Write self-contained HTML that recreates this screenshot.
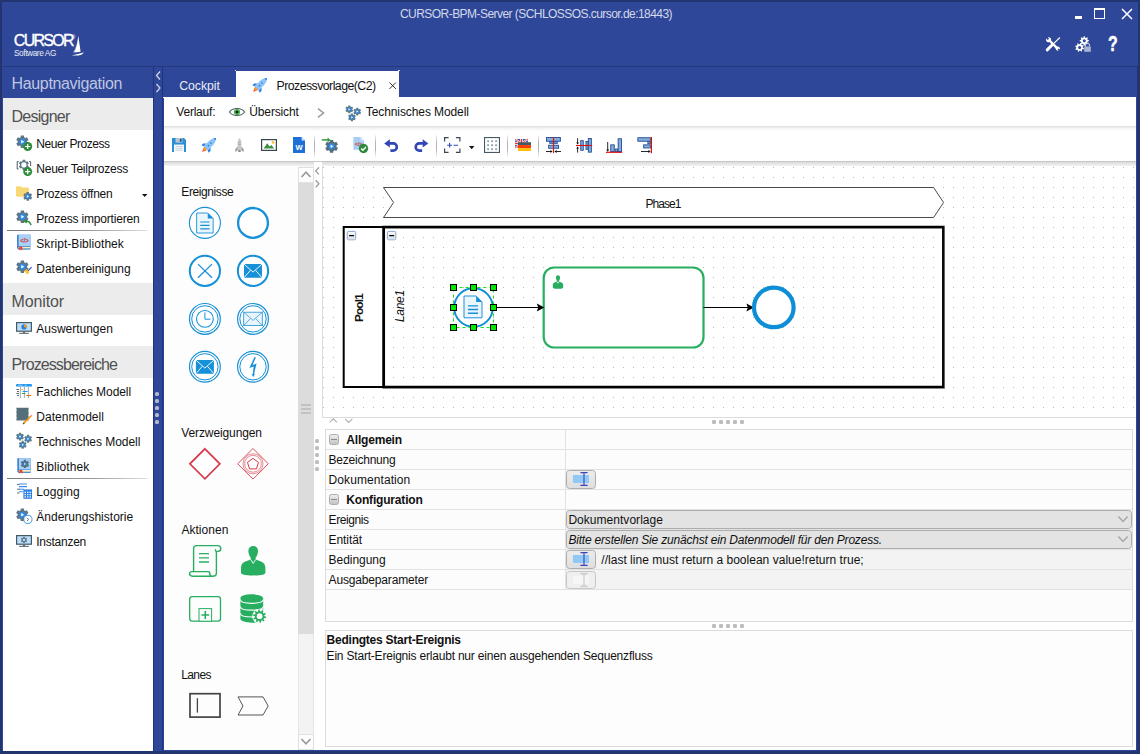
<!DOCTYPE html>
<html><head><meta charset="utf-8"><title>CURSOR-BPM-Server</title>
<style>
*{box-sizing:border-box;margin:0;padding:0}
html,body{width:1140px;height:754px;overflow:hidden}
body{background:#2e4798;font-family:"Liberation Sans",sans-serif;font-size:12px;color:#111;position:relative}
div{position:absolute}
.t{white-space:nowrap;line-height:1}
svg{position:absolute;overflow:visible}
.sec{left:3px;width:150px;background:#ececec}
.nsep{left:7px;width:140px;height:1px;background:linear-gradient(90deg,#777,#999 60%,#ddd)}
.vl{width:1px;background:#20347a}
.hl{height:1px;background:#253a7d}
.sh{left:164px;width:972px;height:5px}
.tsep{top:134px;width:1px;height:24px;background:linear-gradient(rgba(170,170,170,0),#b4b4b4 35%,#b4b4b4 65%,rgba(170,170,170,0))}
</style></head><body>
<div style="left:0;top:0;width:1140px;height:2px;background:#233571"></div>
<div style="left:0;top:0;width:2px;height:754px;background:#233571"></div>
<div style="left:1138px;top:0;width:2px;height:754px;background:#233571"></div>
<div style="left:1136.5px;top:66px;width:3.5px;height:688px;background:#233571"></div>
<div style="left:0;top:751px;width:1140px;height:3px;background:#233571"></div>
<div class="hl" style="left:2px;top:66px;width:1135px"></div>
<div class="vl" style="left:153px;top:66px;height:686px"></div>
<div class="vl" style="left:162px;top:66px;height:686px"></div>

<div class="t" style="left:400px;top:7.84px;font-size:12px;color:#d3d8ea;letter-spacing:-0.550px;">CURSOR-BPM-Server (SCHLOSSOS.cursor.de:18443)</div>
<div class="t" style="left:13.8px;top:33.06px;font-size:16px;color:#fff;letter-spacing:-1.724px;-webkit-text-stroke:0.35px #fff;">CURSOR</div>
<div class="t" style="left:72px;top:35.69px;font-size:4.5px;color:#fff;">®</div>
<div class="t" style="left:14px;top:48.97px;font-size:8.3px;color:#e8ebf5;letter-spacing:-0.416px;">Software AG</div>
<svg style="left:70.9px;top:35px" width="14" height="22" viewBox="0 0 14 22">
<path d="M7.3 0.8 L9.6 16.8 L3.4 17.6 C5.6 12.5 6.6 6.5 7.3 0.8Z" fill="#fff"/>
<path d="M7.0 3.5 C6.3 8.5 4.6 13.8 2.2 17.6 L3.2 17.5 C5.4 13 6.5 8 7.0 3.5Z" fill="#e4e8f4"/>
<path d="M0.8 20.2 C4.5 19.6 9 18.6 12.8 17.2 C12 18.6 10.8 19.6 9.6 20 C6.5 20.6 3.5 20.7 0.8 20.2Z" fill="#fff"/>
</svg>
<div style="left:1075px;top:15.5px;width:7px;height:3px;background:#fff"></div>
<div style="left:1094px;top:8px;width:11px;height:11px;border:1.2px solid #fff;border-top-width:2px"></div>
<svg style="left:1121px;top:8px" width="12" height="12" viewBox="0 0 12 12"><path d="M1 1 L11 11 M11 1 L1 11" stroke="#fff" stroke-width="1.5" fill="none"/></svg>

<svg style="left:1045px;top:36px" width="16" height="16" viewBox="0 0 16 16">
<path d="M4 4 L12.6 12.6" stroke="#fff" stroke-width="2.4" fill="none"/>
<circle cx="3.6" cy="3.8" r="2.5" fill="#fff"/><path d="M3.4 3.4 L0.6 0.2" stroke="#2e4798" stroke-width="1.9"/>
<circle cx="12.8" cy="12.6" r="2.1" fill="#fff"/><path d="M13.2 13 L15.6 15.6" stroke="#2e4798" stroke-width="1.5"/>
<path d="M2.2 13.9 L6.8 9.3" stroke="#fff" stroke-width="2.9" stroke-linecap="round" fill="none"/>
<path d="M6.8 9.3 L14.9 1.5" stroke="#fff" stroke-width="1.1" fill="none"/>
</svg>
<svg style="left:1075px;top:36px" width="17" height="17" viewBox="0 0 17 17"><polygon points="13.88,4.35 13.88,5.25 12.46,5.76 12.21,6.36 12.86,7.72 12.22,8.36 10.86,7.71 10.26,7.96 9.75,9.38 8.85,9.38 8.34,7.96 7.74,7.71 6.38,8.36 5.74,7.72 6.39,6.36 6.14,5.76 4.72,5.25 4.72,4.35 6.14,3.84 6.39,3.24 5.74,1.88 6.38,1.24 7.74,1.89 8.34,1.64 8.85,0.22 9.75,0.22 10.26,1.64 10.86,1.89 12.22,1.24 12.86,1.88 12.21,3.24 12.46,3.84" fill="#fff"/><circle cx="9.3" cy="4.8" r="1.5" fill="#2e4798"/><polygon points="9.01,12.30 8.75,13.14 7.25,13.19 6.85,13.68 7.08,15.16 6.30,15.57 5.21,14.54 4.58,14.60 3.70,15.81 2.86,15.55 2.81,14.05 2.32,13.65 0.84,13.88 0.43,13.10 1.46,12.01 1.40,11.38 0.19,10.50 0.45,9.66 1.95,9.61 2.35,9.12 2.12,7.64 2.90,7.23 3.99,8.26 4.62,8.20 5.50,6.99 6.34,7.25 6.39,8.75 6.88,9.15 8.36,8.92 8.77,9.70 7.74,10.79 7.80,11.42" fill="#fff"/><circle cx="4.6" cy="11.4" r="1.5" fill="#2e4798"/><rect x="9.2" y="10.5" width="6.6" height="5.3" fill="#a9b3d6"/><path d="M10.5 10.5 V9.2 A2 2 0 0 1 14.5 9.2 V10.5" stroke="#c9d0e8" stroke-width="1.1" fill="none"/></svg>
<div class="t" style="left:1108.3px;top:33.80px;font-size:21.5px;color:#fff;font-weight:700;transform:scaleX(.74);transform-origin:0 0;-webkit-text-stroke:0.5px #fff;">?</div>
<div style="left:3px;top:98px;width:150px;height:653px;background:#fff"></div>
<div class="t" style="left:11.5px;top:75.96px;font-size:16px;color:#bec6e1;letter-spacing:-0.343px;">Hauptnavigation</div>
<div class="sec" style="top:98px;height:32px"></div>
<div class="t" style="left:11.5px;top:109.16px;font-size:16px;color:#505050;letter-spacing:-0.754px;">Designer</div>
<div class="sec" style="top:283px;height:32px"></div>
<div class="t" style="left:11.5px;top:294.16px;font-size:16px;color:#505050;letter-spacing:-0.123px;">Monitor</div>
<div class="sec" style="top:346px;height:32px"></div>
<div class="t" style="left:11.5px;top:357.16px;font-size:16px;color:#505050;letter-spacing:-0.911px;">Prozessbereiche</div>
<div class="t" style="left:36.3px;top:137.84px;font-size:12px;color:#111;letter-spacing:-0.467px;">Neuer Prozess</div>
<div class="t" style="left:36.3px;top:162.84px;font-size:12px;color:#111;letter-spacing:-0.243px;">Neuer Teilprozess</div>
<div class="t" style="left:36.3px;top:187.84px;font-size:12px;color:#111;letter-spacing:-0.266px;">Prozess öffnen</div>
<div class="t" style="left:36.3px;top:212.84px;font-size:12px;color:#111;letter-spacing:-0.185px;">Prozess importieren</div>
<div class="t" style="left:36.3px;top:237.84px;font-size:12px;color:#111;letter-spacing:0.053px;">Skript-Bibliothek</div>
<div class="t" style="left:36.3px;top:262.84px;font-size:12px;color:#111;letter-spacing:-0.028px;">Datenbereinigung</div>
<div class="t" style="left:36.3px;top:322.84px;font-size:12px;color:#111;letter-spacing:-0.018px;">Auswertungen</div>
<div class="t" style="left:36.3px;top:385.84px;font-size:12px;color:#111;letter-spacing:-0.079px;">Fachliches Modell</div>
<div class="t" style="left:36.3px;top:410.84px;font-size:12px;color:#111;letter-spacing:0.020px;">Datenmodell</div>
<div class="t" style="left:36.3px;top:435.84px;font-size:12px;color:#111;letter-spacing:-0.040px;">Technisches Modell</div>
<div class="t" style="left:36.3px;top:460.84px;font-size:12px;color:#111;letter-spacing:0.097px;">Bibliothek</div>
<div class="t" style="left:36.3px;top:485.84px;font-size:12px;color:#111;letter-spacing:0.097px;">Logging</div>
<div class="t" style="left:36.3px;top:510.84px;font-size:12px;color:#111;letter-spacing:0.010px;">Änderungshistorie</div>
<div class="t" style="left:36.3px;top:535.84px;font-size:12px;color:#111;letter-spacing:-0.261px;">Instanzen</div>
<div class="nsep" style="top:230px"></div>
<div class="nsep" style="top:478px"></div>
<svg style="left:141.8px;top:193.8px" width="5.4" height="3" viewBox="0 0 5.4 3"><path d="M0 0 H5.4 L2.7 3Z" fill="#111"/></svg>
<svg style="left:0;top:0" width="160" height="754" viewBox="0 0 160 754"><path d="M20.67 137.22 L20.79 135.51 L24.01 135.51 L24.13 137.22 L25.41 137.96 L26.96 137.21 L28.57 140.00 L27.14 140.96 L27.14 142.44 L28.57 143.40 L26.96 146.19 L25.41 145.44 L24.13 146.18 L24.01 147.89 L20.79 147.89 L20.67 146.18 L19.39 145.44 L17.84 146.19 L16.23 143.40 L17.66 142.44 L17.66 140.96 L16.23 140.00 L17.84 137.21 L19.39 137.96Z" fill="#5d7786"/><circle cx="22.4" cy="141.7" r="3.0" fill="#2a8bf0"/><path d="M21.26 139.96 L24.26 141.7 L21.26 143.44Z" fill="#fff"/><circle cx="27.7" cy="146.5" r="4.5" fill="#2e8b3a"/><path d="M25.099999999999998 146.5 H30.3 M27.7 143.9 V149.1" stroke="#fff" stroke-width="1.2"/><path d="M18.6 161.6 H17.2 V169 H18.6 M29.2 161.6 H30.6 V166" stroke="#37474f" stroke-width="0.9" fill="none"/><path d="M22.49 161.26 L22.59 159.87 L25.21 159.87 L25.31 161.26 L26.35 161.86 L27.60 161.25 L28.91 163.52 L27.75 164.30 L27.75 165.50 L28.91 166.28 L27.60 168.55 L26.35 167.94 L25.31 168.54 L25.21 169.93 L22.59 169.93 L22.49 168.54 L21.45 167.94 L20.20 168.55 L18.89 166.28 L20.05 165.50 L20.05 164.30 L18.89 163.52 L20.20 161.25 L21.45 161.86Z" fill="#5d7786"/><circle cx="23.9" cy="164.9" r="2.6" fill="#fff"/><circle cx="27.7" cy="171.6" r="4.5" fill="#2e8b3a"/><path d="M25.099999999999998 171.6 H30.3 M27.7 169.0 V174.2" stroke="#fff" stroke-width="1.2"/><path d="M16 187.3 C16 186.6 16.5 186.2 17.2 186.2 H20.6 L22 187.6 H27.8 C28.5 187.6 29 188.1 29 188.8 V195.6 C29 196.2 28.5 196.7 27.8 196.7 H17.2 C16.5 196.7 16 196.2 16 195.6Z" fill="#f8d775"/><path d="M26.46 193.18 L26.54 191.95 L28.86 191.95 L28.94 193.18 L29.87 193.71 L30.98 193.17 L32.13 195.18 L31.11 195.87 L31.11 196.93 L32.13 197.62 L30.98 199.63 L29.87 199.09 L28.94 199.62 L28.86 200.85 L26.54 200.85 L26.46 199.62 L25.53 199.09 L24.42 199.63 L23.27 197.62 L24.29 196.93 L24.29 195.87 L23.27 195.18 L24.42 193.17 L25.53 193.71Z" fill="#5d7786"/><circle cx="27.7" cy="196.4" r="2.2" fill="#2a8bf0"/><path d="M26.86 195.12 L29.06 196.4 L26.86 197.68Z" fill="#fff"/><path d="M20.67 212.22 L20.79 210.51 L24.01 210.51 L24.13 212.22 L25.41 212.96 L26.96 212.21 L28.57 215.00 L27.14 215.96 L27.14 217.44 L28.57 218.40 L26.96 221.19 L25.41 220.44 L24.13 221.18 L24.01 222.89 L20.79 222.89 L20.67 221.18 L19.39 220.44 L17.84 221.19 L16.23 218.40 L17.66 217.44 L17.66 215.96 L16.23 215.00 L17.84 212.21 L19.39 212.96Z" fill="#5d7786"/><circle cx="22.4" cy="216.7" r="3.0" fill="#2a8bf0"/><path d="M21.26 214.96 L24.26 216.7 L21.26 218.44Z" fill="#fff"/><path d="M25.2 221.3 C28.2 220.6 30.4 222.4 31 225.2" stroke="#2e8b3a" stroke-width="1.5" fill="none"/><path d="M23.2 221.6 L26.6 219.2 L26.8 223.4Z" fill="#2e8b3a"/><path d="M17.200000000000003 234.8 H30.400000000000002 V249.4 H19.0 C17.8 249.4 17.200000000000003 248.60000000000002 17.200000000000003 247.60000000000002Z" fill="#1769c8"/><rect x="18.5" y="234.8" width="11.9" height="11.4" fill="#a9d1f7"/><path d="M18.8 246.70000000000002 H30.400000000000002 V248.4 H18.8 C18.200000000000003 248.20000000000002 18.200000000000003 247.0 18.8 246.70000000000002Z" fill="#fbeec2"/><path d="M19.200000000000003 246.70000000000002 H22.200000000000003 V250.4 L20.700000000000003 249.20000000000002 L19.200000000000003 250.4Z" fill="#f4411e"/><text x="24.3" y="242.8" font-size="6.4" font-weight="700" fill="#d03232" text-anchor="middle" letter-spacing="-0.3" font-family="Liberation Sans,sans-serif">&lt;/&gt;</text><path d="M20.67 262.32 L20.79 260.61 L24.01 260.61 L24.13 262.32 L25.41 263.06 L26.96 262.31 L28.57 265.10 L27.14 266.06 L27.14 267.54 L28.57 268.50 L26.96 271.29 L25.41 270.54 L24.13 271.28 L24.01 272.99 L20.79 272.99 L20.67 271.28 L19.39 270.54 L17.84 271.29 L16.23 268.50 L17.66 267.54 L17.66 266.06 L16.23 265.10 L17.84 262.31 L19.39 263.06Z" fill="#5d7786"/><circle cx="22.4" cy="266.8" r="3.0" fill="#2a8bf0"/><path d="M21.26 265.06 L24.26 266.8 L21.26 268.54Z" fill="#fff"/><path d="M27.4 271.4 L31.6 267.2" stroke="#3949ab" stroke-width="1.2"/><path d="M24.4 271 L26.6 269 L29.4 272 L27.4 274.6Z" fill="#fbc02d"/><rect x="16.6" y="322.6" width="14.8" height="8.6" fill="#bbdefb" stroke="#455a64" stroke-width="1.2"/><rect x="23.2" y="331.6" width="1.6" height="1.6" fill="#455a64"/><rect x="19.2" y="332.8" width="9.6" height="1" fill="#455a64"/><circle cx="24" cy="326.9" r="2.7" fill="#2a7de1"/><path d="M24 326.9 V324.2 A2.7 2.7 0 0 1 26.4 328.1Z" fill="#ff9800"/><path d="M16 386.6 V385.4 C16 384.5 16.6 384 17.4 384 H30.6 C31.4 384 32 384.5 32 385.4 V386.6Z" fill="#2196f3"/><path d="M18 385.2 H22.6 M24.6 385.2 H26.6" stroke="#cfe6fb" stroke-width="0.7"/><path d="M20.4 386.6 V398 M24.4 386.6 V398 M28.4 386.6 V398" stroke="#90a4ae" stroke-width="0.9"/><path d="M16.4 389.5 H19 M17 391.5 H19 M16.4 393.5 H19 M17 395.5 H19" stroke="#37474f" stroke-width="0.8"/><path d="M21.2 389.5 H23" stroke="#fbc02d" stroke-width="1"/><path d="M22.6 391.5 H27.6" stroke="#2196f3" stroke-width="1"/><path d="M22 393.5 H25.4" stroke="#43a047" stroke-width="1"/><path d="M26.4 395.5 H31.2" stroke="#ef6c00" stroke-width="1"/><path d="M16.4 407.8 H28.6 V410.2 L28 410.8 L28.6 411.4 V414.6 L28 415.2 L28.6 415.8 V420.6 H16.4 V418.4 L17 417.8 L16.4 417.2 V414.6 L17 414 L16.4 413.4 V410.8 L17 410.2 L16.4 409.6Z" fill="#546e7a"/><path d="M23.6 423.4 L31 416" stroke="#f59a0b" stroke-width="1.7"/><path d="M23 424 L24.2 422.8" stroke="#555" stroke-width="1.2"/><circle cx="31.4" cy="415.6" r="0.9" fill="#ef9a9a"/><path d="M18.89 433.73 L18.97 432.63 L21.03 432.63 L21.11 433.73 L21.93 434.21 L22.92 433.72 L23.95 435.51 L23.04 436.13 L23.04 437.07 L23.95 437.69 L22.92 439.48 L21.93 438.99 L21.11 439.47 L21.03 440.57 L18.97 440.57 L18.89 439.47 L18.07 438.99 L17.08 439.48 L16.05 437.69 L16.96 437.07 L16.96 436.13 L16.05 435.51 L17.08 433.72 L18.07 434.21Z" fill="#607d8b"/><circle cx="20.0" cy="436.6" r="1.9" fill="#2a8bf0"/><path d="M19.28 435.50 L21.18 436.6 L19.28 437.70Z" fill="#fff"/><path d="M26.99 435.93 L27.07 434.83 L29.13 434.83 L29.21 435.93 L30.03 436.41 L31.02 435.92 L32.05 437.71 L31.14 438.33 L31.14 439.27 L32.05 439.89 L31.02 441.68 L30.03 441.19 L29.21 441.67 L29.13 442.77 L27.07 442.77 L26.99 441.67 L26.17 441.19 L25.18 441.68 L24.15 439.89 L25.06 439.27 L25.06 438.33 L24.15 437.71 L25.18 435.92 L26.17 436.41Z" fill="#607d8b"/><circle cx="28.1" cy="438.8" r="1.9" fill="#2a8bf0"/><path d="M27.38 437.70 L29.28 438.8 L27.38 439.90Z" fill="#fff"/><path d="M21.59 441.93 L21.67 440.83 L23.73 440.83 L23.81 441.93 L24.63 442.41 L25.62 441.92 L26.65 443.71 L25.74 444.33 L25.74 445.27 L26.65 445.89 L25.62 447.68 L24.63 447.19 L23.81 447.67 L23.73 448.77 L21.67 448.77 L21.59 447.67 L20.77 447.19 L19.78 447.68 L18.75 445.89 L19.66 445.27 L19.66 444.33 L18.75 443.71 L19.78 441.92 L20.77 442.41Z" fill="#607d8b"/><circle cx="22.7" cy="444.8" r="1.9" fill="#2a8bf0"/><path d="M21.98 443.70 L23.88 444.8 L21.98 445.90Z" fill="#fff"/><path d="M17.400000000000002 458.2 H30.6 V472.8 H19.2 C18.0 472.8 17.400000000000002 472.0 17.400000000000002 471.0Z" fill="#1769c8"/><rect x="18.7" y="458.2" width="11.9" height="11.4" fill="#a9d1f7"/><path d="M19.0 470.09999999999997 H30.6 V471.8 H19.0 C18.400000000000002 471.59999999999997 18.400000000000002 470.4 19.0 470.09999999999997Z" fill="#fbeec2"/><path d="M19.400000000000002 470.09999999999997 H22.4 V473.8 L20.9 472.59999999999997 L19.400000000000002 473.8Z" fill="#f4411e"/><path d="M23.74 460.89 L23.82 459.74 L25.98 459.74 L26.06 460.89 L26.92 461.39 L27.96 460.88 L29.05 462.76 L28.09 463.40 L28.09 464.40 L29.05 465.04 L27.96 466.92 L26.92 466.41 L26.06 466.91 L25.98 468.06 L23.82 468.06 L23.74 466.91 L22.88 466.41 L21.84 466.92 L20.75 465.04 L21.71 464.40 L21.71 463.40 L20.75 462.76 L21.84 460.88 L22.88 461.39Z" fill="#546e7a"/><circle cx="24.9" cy="463.9" r="1.7" fill="#2a8bf0"/><path d="M24.25 462.91 L25.95 463.9 L24.25 464.89Z" fill="#fff"/><path d="M19 484 H27 M19 486.6 H27 M19 489.2 H24 M19 491.8 H23" stroke="#3d8bea" stroke-width="1.1"/><path d="M17 484.6 H19.4 M17 489.2 H19.4 M17 493 H19.4" stroke="#37474f" stroke-width="0.8"/><rect x="23.4" y="489.4" width="8.6" height="9.4" fill="#2a7de1"/><rect x="24.5" y="491.6" width="1.5" height="1.4" fill="#e8f1fc"/><rect x="24.5" y="493.90000000000003" width="1.5" height="1.4" fill="#e8f1fc"/><rect x="24.5" y="496.20000000000005" width="1.5" height="1.4" fill="#e8f1fc"/><rect x="27.0" y="491.6" width="1.5" height="1.4" fill="#e8f1fc"/><rect x="27.0" y="493.90000000000003" width="1.5" height="1.4" fill="#e8f1fc"/><rect x="27.0" y="496.20000000000005" width="1.5" height="1.4" fill="#e8f1fc"/><rect x="29.5" y="491.6" width="1.5" height="1.4" fill="#e8f1fc"/><rect x="29.5" y="493.90000000000003" width="1.5" height="1.4" fill="#e8f1fc"/><rect x="29.5" y="496.20000000000005" width="1.5" height="1.4" fill="#e8f1fc"/><path d="M20.57 510.22 L20.69 508.51 L23.91 508.51 L24.03 510.22 L25.31 510.96 L26.86 510.21 L28.47 513.00 L27.04 513.96 L27.04 515.44 L28.47 516.40 L26.86 519.19 L25.31 518.44 L24.03 519.18 L23.91 520.89 L20.69 520.89 L20.57 519.18 L19.29 518.44 L17.74 519.19 L16.13 516.40 L17.56 515.44 L17.56 513.96 L16.13 513.00 L17.74 510.21 L19.29 510.96Z" fill="#5d7786"/><circle cx="22.3" cy="514.7" r="3.0" fill="#2a8bf0"/><path d="M21.16 512.96 L24.16 514.7 L21.16 516.44Z" fill="#fff"/><circle cx="27.9" cy="519.4" r="4.1" fill="#fff" stroke="#2a8bf0" stroke-width="0.9"/><path d="M27 517.8 L28.6 519.4 L27 521" stroke="#5d4037" stroke-width="0.8" fill="none"/><rect x="16.6" y="535.6" width="14.8" height="8.6" fill="#bbdefb" stroke="#455a64" stroke-width="1.2"/><rect x="23.2" y="544.6" width="1.6" height="1.6" fill="#455a64"/><rect x="19.2" y="545.8" width="9.6" height="1" fill="#455a64"/><path d="M23.14 537.66 L23.19 536.80 L24.81 536.80 L24.86 537.66 L25.51 538.03 L26.28 537.65 L27.08 539.05 L26.37 539.53 L26.37 540.27 L27.08 540.75 L26.28 542.15 L25.51 541.77 L24.86 542.14 L24.81 543.00 L23.19 543.00 L23.14 542.14 L22.49 541.77 L21.72 542.15 L20.92 540.75 L21.63 540.27 L21.63 539.53 L20.92 539.05 L21.72 537.65 L22.49 538.03Z" fill="#5d7786"/><circle cx="24" cy="539.9" r="1.2" fill="#bbdefb"/></svg>
<div style="left:163px;top:97px;width:973px;height:653px;background:#fff"></div><div style="left:163px;top:98px;width:1px;height:652px;background:#2843a0"></div>
<div class="t" style="left:179.2px;top:79.59px;font-size:12.3px;color:#e9ecf6;letter-spacing:-0.059px;">Cockpit</div>
<div style="left:236px;top:71px;width:163px;height:28px;background:#fff"></div>
<div class="t" style="left:276.5px;top:79.59px;font-size:12.3px;color:#111;letter-spacing:-0.537px;">Prozessvorlage(C2)</div>
<svg style="left:389px;top:82px" width="7.4" height="7.4" viewBox="0 0 8 8"><path d="M0.5 0.5 L7.5 7.5 M7.5 0.5 L0.5 7.5" stroke="#222" stroke-width="1.0" fill="none"/></svg>
<div style="left:234.8px;top:69.6px;width:1.6px;height:1.6px;background:#dfe3f0"></div><div style="left:398.4px;top:69.6px;width:1.6px;height:1.6px;background:#dfe3f0"></div>
<svg style="left:155px;top:70px" width="6" height="24" viewBox="0 0 6 24"><path d="M5 1.5 L1.5 5.5 L5 9.5 M1.5 14 L5 18 L1.5 22" stroke="#d5d9ea" stroke-width="1.2" fill="none"/></svg>
<div class="t" style="left:176.3px;top:106.34px;font-size:12px;color:#111;letter-spacing:-0.213px;">Verlauf:</div>
<div class="t" style="left:249.3px;top:106.34px;font-size:12px;color:#111;letter-spacing:-0.143px;">Übersicht</div>
<div class="t" style="left:365.8px;top:106.34px;font-size:12px;color:#111;letter-spacing:-0.095px;">Technisches Modell</div>
<svg style="left:317px;top:107.5px" width="8" height="10" viewBox="0 0 8 10"><path d="M1 0.7 L6.5 5 L1 9.3" stroke="#9a9a9a" stroke-width="1.5" fill="none"/></svg>
<div class="sh" style="top:126px;background:linear-gradient(#dedede,#f2f2f2 40%,#fff)"></div>
<div class="sh" style="top:161px;height:6.5px;background:linear-gradient(#bcbcbc,#d9d9d9 16%,#e9e9e9 45%,#f6f6f6 80%,#fdfdfd)"></div>
<div class="tsep" style="left:314px"></div>
<div class="tsep" style="left:375px"></div>
<div class="tsep" style="left:436px"></div>
<div class="tsep" style="left:507px"></div>
<div class="tsep" style="left:538px"></div>
<svg style="left:172px;top:138px" width="14" height="14" viewBox="0 0 14 14"><path d="M0 0 H12 L14 2 V14 H0Z" fill="#2b8fd8"/><rect x="3.5" y="0" width="7" height="4.6" fill="#b9c4cc"/><rect x="7.8" y="0.8" width="1.9" height="3" fill="#1f5f96"/>
<rect x="2" y="6.6" width="10" height="7.4" fill="#fff"/><path d="M3.2 8.4 H10.8 M3.2 10.3 H10.8 M3.2 12.2 H10.8" stroke="#b5c7d6" stroke-width="0.9"/></svg>
<svg style="left:201px;top:137px" width="16" height="16" viewBox="0 0 16 16"><g transform="rotate(45 8 8)">
<path d="M8 -1.8 C10.2 0.6 10.9 3 10.9 6 V13 H5.1 V6 C5.1 3 5.8 0.6 8 -1.8Z" fill="#8cc4f5"/>
<path d="M8 -1.8 C8.7 -1.1 9.1 -0.5 9.4 0.1 H6.6 C6.9 -0.5 7.3 -1.1 8 -1.8Z" fill="#2f7fe0"/>
<path d="M5.1 8.8 L2.8 11 V13.6 L5.1 12.8Z M10.9 8.8 L13.2 11 V13.6 L10.9 12.8Z" fill="#2f7fe0"/>
<circle cx="8" cy="5.2" r="0.85" fill="#2f7fe0"/><circle cx="8" cy="8.8" r="0.85" fill="#2f7fe0"/>
<path d="M6 13 H10 L8 17.8Z" fill="#f4511e"/><path d="M6.9 13 H9.1 L8 15.8Z" fill="#ffb300"/></g></svg>
<svg style="left:234.5px;top:137.5px" width="9" height="15" viewBox="0 0 9 15"><path d="M4.5 0 C5.6 1.2 6.4 3 6.4 5.4 V12 H2.6 V5.4 C2.6 3 3.4 1.2 4.5 0Z" fill="#c9c9c9"/>
<path d="M2.6 8.5 L0.4 11 V14 L2.6 12.6Z M6.4 8.5 L8.6 11 V14 L6.4 12.6Z" fill="#9a9a9a"/><rect x="3.3" y="12" width="2.4" height="2" fill="#8a8a8a"/>
<path d="M3.4 4.5 H5.6 M3.4 6.5 H5.6" stroke="#9c9c9c" stroke-width="0.7"/></svg>
<svg style="left:261px;top:139px" width="16" height="12" viewBox="0 0 16 12"><rect x="0.6" y="0.6" width="14.8" height="10.8" fill="#fff" stroke="#37474f" stroke-width="1.2"/>
<path d="M2.6 9.6 L6.2 4.2 L8.6 7.6 L10.4 6 L13.2 9.6Z" fill="#3d9142"/><circle cx="12" cy="3.4" r="1.3" fill="#fbc02d"/></svg>
<svg style="left:293.3px;top:137px" width="12" height="16" viewBox="0 0 12 16"><path d="M0 0 H8.6 L12 3.4 V16 H0Z" fill="#1e6fd6"/><path d="M8.6 0 V3.4 H12Z" fill="#d6e6fa"/>
<text x="6" y="12.6" font-size="7.6" font-weight="700" fill="#fff" text-anchor="middle" font-family="Liberation Sans,sans-serif">W</text></svg>
<svg style="left:321px;top:137px" width="18" height="16" viewBox="0 0 18 16"><path d="M8.82 4.68 L8.94 2.91 L12.26 2.91 L12.38 4.68 L13.71 5.45 L15.30 4.67 L16.96 7.55 L15.49 8.54 L15.49 10.06 L16.96 11.05 L15.30 13.93 L13.71 13.15 L12.38 13.92 L12.26 15.69 L8.94 15.69 L8.82 13.92 L7.49 13.15 L5.90 13.93 L4.24 11.05 L5.71 10.06 L5.71 8.54 L4.24 7.55 L5.90 4.67 L7.49 5.45Z" fill="#546e7a"/><circle cx="10.6" cy="9.3" r="3.0" fill="#2a8bf0"/><path d="M9.6 7.7 L12.4 9.3 L9.6 10.9Z" fill="#fff"/>
<path d="M0.8 2.9 H7.5" stroke="#2e9a3a" stroke-width="1.5"/><path d="M6.6 0.6 L9.6 2.9 L6.6 5.2Z" fill="#2e9a3a"/></svg>
<svg style="left:353px;top:137px" width="16" height="17" viewBox="0 0 16 17"><path d="M0.4 0 H7.6 L11 3.4 V12.8 H0.4Z" fill="#a9cdf5"/><path d="M7.6 0 V3.4 H11Z" fill="#dcebfb"/>
<text x="5.4" y="9.3" font-size="5.6" font-weight="700" fill="#d03232" text-anchor="middle" letter-spacing="-0.3" font-family="Liberation Sans,sans-serif">&lt;/&gt;</text>
<circle cx="10.5" cy="11.5" r="4.7" fill="#2e8b3a"/><path d="M8.2 11.5 L9.9 13.2 L13 10" stroke="#fff" stroke-width="1.4" fill="none"/></svg>
<svg style="left:384px;top:139px" width="14.5" height="13" viewBox="0 0 14.5 13"><path d="M0.2 4.4 L5.8 0.2 V8.6Z" fill="#3346b8"/><path d="M5 4.4 H9.2 A3.6 3.6 0 0 1 9.2 11.6 H6.4" stroke="#3346b8" stroke-width="2.6" fill="none"/></svg>
<svg style="left:414px;top:139px;transform:scaleX(-1)" width="14.5" height="13" viewBox="0 0 14.5 13"><path d="M0.2 4.4 L5.8 0.2 V8.6Z" fill="#3346b8"/><path d="M5 4.4 H9.2 A3.6 3.6 0 0 1 9.2 11.6 H6.4" stroke="#3346b8" stroke-width="2.6" fill="none"/></svg>
<svg style="left:444px;top:137px" width="16.5" height="16" viewBox="0 0 16.5 16"><path d="M0.6 4.6 V0.6 H4.6 M11.9 0.6 H15.9 V4.6 M15.9 11.4 V15.4 H11.9 M4.6 15.4 H0.6 V11.4" stroke="#3a4856" stroke-width="1.2" fill="none"/>
<path d="M3.2 8.2 H8 M5.6 5.8 V10.6 M9.6 8.2 H14" stroke="#2d4bb8" stroke-width="1.1" fill="none"/></svg>
<svg style="left:468.8px;top:146px" width="5.4" height="3.2" viewBox="0 0 5.4 3.2"><path d="M0 0 H5.4 L2.7 3.2Z" fill="#111"/></svg>
<svg style="left:484px;top:137.2px" width="16" height="16" viewBox="0 0 16 16"><rect x="0.55" y="0.55" width="14.9" height="14.9" fill="#fff" stroke="#455a64" stroke-width="1.1"/><rect x="3.1499999999999995" y="3.25" width="1.9" height="1.9" fill="#90a4ae"/><rect x="3.1499999999999995" y="7.249999999999999" width="1.9" height="1.9" fill="#90a4ae"/><rect x="3.1499999999999995" y="11.25" width="1.9" height="1.9" fill="#90a4ae"/><rect x="7.1499999999999995" y="3.25" width="1.9" height="1.9" fill="#90a4ae"/><rect x="7.1499999999999995" y="7.249999999999999" width="1.9" height="1.9" fill="#90a4ae"/><rect x="7.1499999999999995" y="11.25" width="1.9" height="1.9" fill="#90a4ae"/><rect x="11.15" y="3.25" width="1.9" height="1.9" fill="#90a4ae"/><rect x="11.15" y="7.249999999999999" width="1.9" height="1.9" fill="#90a4ae"/><rect x="11.15" y="11.25" width="1.9" height="1.9" fill="#90a4ae"/></svg>
<svg style="left:515px;top:139px" width="17" height="13" viewBox="0 0 17 13"><rect x="0" y="0" width="13" height="9" fill="#3f51b5"/>
<path d="M0 0 L13 9 M13 0 L0 9" stroke="#fff" stroke-width="2"/><path d="M0 0 L13 9 M13 0 L0 9" stroke="#e53935" stroke-width="0.8"/>
<path d="M0 4.5 H13 M6.5 0 V9" stroke="#fff" stroke-width="3"/><path d="M0 4.5 H13 M6.5 0 V9" stroke="#e53935" stroke-width="1.6"/>
<rect x="3" y="3.2" width="13" height="2.9" fill="#455a64"/><rect x="3" y="6.1" width="13" height="3" fill="#ff3d00"/><rect x="3" y="9.1" width="13" height="2.9" fill="#ffc107"/></svg>
<svg style="left:0px;top:0px" width="700" height="160" viewBox="0 0 700 160"><rect x="546.55" y="137.45" width="13.80" height="3.80" fill="#86add9" stroke="#1d4c94" stroke-width="0.9"/><rect x="549.75" y="141.65" width="7.50" height="1.70" fill="#86add9" stroke="#1d4c94" stroke-width="0.9"/><rect x="548.65" y="145.25" width="9.90" height="3.00" fill="#86add9" stroke="#1d4c94" stroke-width="0.9"/><path d="M553.5 137 V153.2" stroke="#e01010" stroke-width="1.1"/><path d="M546 151.5 H551.4 M555.6 151.5 H561" stroke="#111" stroke-width="0.9"/><path d="M550.4 150.1 L552.6 151.5 L550.4 152.9Z M556.6 150.1 L554.4 151.5 L556.6 152.9Z" fill="#111"/><rect x="580.75" y="140.65" width="2.50" height="9.60" fill="#86add9" stroke="#1d4c94" stroke-width="0.9"/><rect x="585.95" y="141.45" width="2.20" height="7.90" fill="#86add9" stroke="#1d4c94" stroke-width="0.9"/><rect x="588.35" y="138.55" width="3.00" height="13.60" fill="#86add9" stroke="#1d4c94" stroke-width="0.9"/><path d="M576 145.5 H592.2" stroke="#e01010" stroke-width="1.1"/><path d="M577.6 138.2 V143.6 M577.6 147.4 V152.6" stroke="#111" stroke-width="0.9"/><path d="M576.2 142.4 L577.6 144.6 L579 142.4Z M576.2 148.6 L577.6 146.4 L579 148.6Z" fill="#111"/><rect x="610.75" y="144.85" width="3.50" height="6.70" fill="#86add9" stroke="#1d4c94" stroke-width="0.9"/><rect x="615.15" y="149.05" width="2.50" height="2.50" fill="#86add9" stroke="#1d4c94" stroke-width="0.9"/><rect x="618.15" y="138.75" width="3.30" height="12.80" fill="#86add9" stroke="#1d4c94" stroke-width="0.9"/><path d="M606 152.3 H622.2" stroke="#e01010" stroke-width="1.2"/><path d="M607.7 142 V150.4" stroke="#111" stroke-width="0.9"/><path d="M606.3 149.4 L607.7 151.7 L609.1 149.4Z" fill="#111"/><rect x="637.85" y="137.75" width="12.50" height="3.50" fill="#86add9" stroke="#1d4c94" stroke-width="0.9"/><rect x="647.85" y="141.65" width="2.50" height="2.10" fill="#86add9" stroke="#1d4c94" stroke-width="0.9"/><rect x="643.65" y="144.85" width="6.70" height="3.10" fill="#86add9" stroke="#1d4c94" stroke-width="0.9"/><path d="M651.4 137 V153.2" stroke="#e01010" stroke-width="1.2"/><path d="M641 151.5 H649.4" stroke="#111" stroke-width="0.9"/><path d="M648.4 150.1 L650.7 151.5 L648.4 152.9Z" fill="#111"/></svg>
<svg style="left:252px;top:77px" width="16" height="16" viewBox="0 0 16 16"><g transform="rotate(45 8 8)">
<path d="M8 -1.8 C10.2 0.6 10.9 3 10.9 6 V13 H5.1 V6 C5.1 3 5.8 0.6 8 -1.8Z" fill="#8cc4f5"/>
<path d="M8 -1.8 C8.7 -1.1 9.1 -0.5 9.4 0.1 H6.6 C6.9 -0.5 7.3 -1.1 8 -1.8Z" fill="#2f7fe0"/>
<path d="M5.1 8.8 L2.8 11 V13.6 L5.1 12.8Z M10.9 8.8 L13.2 11 V13.6 L10.9 12.8Z" fill="#2f7fe0"/>
<circle cx="8" cy="5.2" r="0.85" fill="#2f7fe0"/><circle cx="8" cy="8.8" r="0.85" fill="#2f7fe0"/>
<path d="M6 13 H10 L8 17.8Z" fill="#f4511e"/><path d="M6.9 13 H9.1 L8 15.8Z" fill="#ffb300"/></g></svg>
<svg style="left:229px;top:107px" width="16" height="10" viewBox="0 0 16 10"><path d="M0.5 5 C3.5 0.4 12.5 0.4 15.5 5 C12.5 9.6 3.5 9.6 0.5 5Z" fill="#fff" stroke="#455a64" stroke-width="1.1"/><circle cx="8" cy="5" r="3.1" fill="#4caf50"/><circle cx="8" cy="5" r="1.3" fill="#111"/></svg>
<svg style="left:0px;top:0px" width="400" height="130" viewBox="0 0 400 130"><path d="M348.21 106.59 L348.29 105.51 L350.31 105.51 L350.39 106.59 L351.19 107.05 L352.16 106.58 L353.17 108.33 L352.28 108.93 L352.28 109.87 L353.17 110.47 L352.16 112.22 L351.19 111.75 L350.39 112.21 L350.31 113.29 L348.29 113.29 L348.21 112.21 L347.41 111.75 L346.44 112.22 L345.43 110.47 L346.32 109.87 L346.32 108.93 L345.43 108.33 L346.44 106.58 L347.41 107.05Z" fill="#607d8b"/><circle cx="349.3" cy="109.4" r="1.8619999999999999" fill="#2a8bf0"/><path d="M348.59 108.32 L350.45 109.4 L348.59 110.48Z" fill="#fff"/><path d="M356.15 108.74 L356.23 107.67 L358.25 107.67 L358.32 108.74 L359.13 109.21 L360.10 108.74 L361.11 110.49 L360.22 111.09 L360.22 112.02 L361.11 112.62 L360.10 114.38 L359.13 113.90 L358.32 114.37 L358.25 115.44 L356.23 115.44 L356.15 114.37 L355.35 113.90 L354.38 114.38 L353.36 112.62 L354.26 112.02 L354.26 111.09 L353.36 110.49 L354.38 108.74 L355.35 109.21Z" fill="#607d8b"/><circle cx="357.238" cy="111.55600000000001" r="1.8619999999999999" fill="#2a8bf0"/><path d="M356.53 110.48 L358.39 111.55600000000001 L356.53 112.64Z" fill="#fff"/><path d="M350.86 114.62 L350.93 113.55 L352.96 113.55 L353.03 114.62 L353.84 115.09 L354.81 114.62 L355.82 116.37 L354.92 116.97 L354.92 117.90 L355.82 118.50 L354.81 120.26 L353.84 119.78 L353.03 120.25 L352.96 121.32 L350.93 121.32 L350.86 120.25 L350.05 119.78 L349.08 120.26 L348.07 118.50 L348.97 117.90 L348.97 116.97 L348.07 116.37 L349.08 114.62 L350.05 115.09Z" fill="#607d8b"/><circle cx="351.946" cy="117.436" r="1.8619999999999999" fill="#2a8bf0"/><path d="M351.24 116.36 L353.10 117.436 L351.24 118.52Z" fill="#fff"/></svg>
<div style="left:164px;top:166px;width:135px;height:584px;background:#fdfdfd"></div>
<div class="t" style="left:181.3px;top:185.84px;font-size:12px;color:#111;letter-spacing:-0.403px;">Ereignisse</div>
<div class="t" style="left:181.3px;top:426.84px;font-size:12px;color:#111;letter-spacing:-0.113px;">Verzweigungen</div>
<div class="t" style="left:181.4px;top:523.64px;font-size:12px;color:#111;letter-spacing:0.037px;">Aktionen</div>
<div class="t" style="left:181.3px;top:668.84px;font-size:12px;color:#111;letter-spacing:-0.641px;">Lanes</div>
<svg style="left:0;top:0" width="330" height="754" viewBox="0 0 330 754"><circle cx="204.9" cy="222.9" r="15.5" fill="#fff" stroke="#1690d8" stroke-width="1.1"/><path d="M196.65 213.0 H207.75 L213.15 218.4 V233.0 H196.65Z" fill="#eaf5fc" stroke="#1690d8" stroke-width="0.9"/><path d="M207.75 213.0 V218.4 H213.15Z" fill="#1690d8"/><path d="M200.25 222.0 H209.55 M200.25 225.4 H209.55 M200.25 228.8 H209.55" stroke="#1690d8" stroke-width="1.2"/><circle cx="253" cy="222.9" r="14.9" fill="#fff" stroke="#1690d8" stroke-width="2.3"/><circle cx="204.9" cy="270.9" r="15.1" fill="#fff" stroke="#1690d8" stroke-width="2.0"/><path d="M198 264.1 L212 277.7 M212 264.1 L198 277.7" stroke="#1690d8" stroke-width="1.3"/><circle cx="253" cy="270.9" r="15.1" fill="#fff" stroke="#1690d8" stroke-width="2.0"/><rect x="244.0" y="264.09999999999997" width="18" height="13.6" rx="0.8" fill="#1690d8"/><path d="M244.0 264.09999999999997 L253 272.09999999999997 L262.0 264.09999999999997 M244.0 277.7 L250.4 270.29999999999995 M262.0 277.7 L255.6 270.29999999999995" stroke="#fff" stroke-width="0.9" fill="none"/><circle cx="204.9" cy="318.9" r="15.4" fill="#fff" stroke="#1690d8" stroke-width="1.2"/><circle cx="204.9" cy="318.9" r="13.2" fill="#fff" stroke="#1690d8" stroke-width="1.0"/><circle cx="204.9" cy="318.9" r="8.4" fill="none" stroke="#1690d8" stroke-width="1.1"/><path d="M204.9 312.4 V319.2 H210.5" stroke="#1690d8" stroke-width="1.0" fill="none"/><circle cx="253" cy="318.9" r="15.4" fill="#fff" stroke="#1690d8" stroke-width="1.2"/><circle cx="253" cy="318.9" r="13.2" fill="#fff" stroke="#1690d8" stroke-width="1.0"/><rect x="243.7" y="312.2" width="18.6" height="13.4" fill="#e9f4fc" stroke="#1690d8" stroke-width="0.8"/><path d="M243.7 312.2 L253 320.4 L262.3 312.2 M243.7 325.59999999999997 L250.4 318.5 M262.3 325.59999999999997 L255.6 318.5" stroke="#1690d8" stroke-width="0.7" fill="none"/><circle cx="204.9" cy="366.8" r="15.4" fill="#fff" stroke="#1690d8" stroke-width="1.2"/><circle cx="204.9" cy="366.8" r="13.2" fill="#fff" stroke="#1690d8" stroke-width="1.0"/><rect x="195.9" y="360.09999999999997" width="18" height="13.6" rx="0.8" fill="#1690d8"/><path d="M195.9 360.09999999999997 L204.9 368.09999999999997 L213.9 360.09999999999997 M195.9 373.7 L202.3 366.29999999999995 M213.9 373.7 L207.5 366.29999999999995" stroke="#fff" stroke-width="0.9" fill="none"/><circle cx="253" cy="366.8" r="15.4" fill="#fff" stroke="#1690d8" stroke-width="1.2"/><circle cx="253" cy="366.8" r="13.2" fill="#fff" stroke="#1690d8" stroke-width="1.0"/><path d="M254.6 356.8 L249.4 368 L253.6 366.4 L252.8 374.6 L251.4 373.6 L253.2 377 L255.2 373.4 L254 374 L256.6 363.4 L252.6 365 L255.8 357.4Z" fill="#1690d8"/><path d="M204.9 448.8 L219.9 463.8 L204.9 478.8 L189.9 463.8Z" fill="#fff" stroke="#d63a4c" stroke-width="1.7"/><path d="M253 448.5 L268.3 463.8 L253 479.1 L237.7 463.8Z" fill="#fff" stroke="#d63a4c" stroke-width="0.9"/><circle cx="253" cy="463.8" r="10" fill="none" stroke="#d63a4c" stroke-width="0.6"/><circle cx="253" cy="463.8" r="8.4" fill="none" stroke="#d63a4c" stroke-width="0.6"/><polygon points="253.00,458.40 258.52,462.41 256.41,468.89 249.59,468.89 247.48,462.41" fill="none" stroke="#d63a4c" stroke-width="1.0"/><path d="M193.6 571.6 V548.4 C193.6 546.4 194.8 545.6 196.6 545.6 H217.6 C219.8 545.6 220.8 547 220.8 548.6 C220.8 550.4 219.8 551.4 218 551.4 H216.4 C215.4 551.2 215.2 550 216 549.4 M216.4 551.4 V573 C216.4 575.4 214.8 576.2 212.8 576.2 H192.6 C190.6 576.2 189.6 575 189.6 573.6 C189.6 572.2 190.4 571.6 191.8 571.6 H208 C209.6 571.6 210 573 209.8 574 C209.8 575.4 211.2 576.2 212.8 576.2" fill="none" stroke="#27ae60" stroke-width="1.4" stroke-linejoin="round"/>
<path d="M199 553.6 H209 M199 557.8 H209 M199 562 H209" stroke="#27ae60" stroke-width="1.3"/><path d="M253.2 546 C256.6 546 258.2 548.6 258 551.6 C257.8 554.6 256.6 556.6 255.6 557.8 V559.4 L261.6 561.8 C264 562.8 265.4 565 265.4 568 V572.4 C265.4 574.2 262 575.4 253.2 575.4 C244.4 575.4 241 574.2 241 572.4 V568 C241 565 242.4 562.8 244.8 561.8 L250.8 559.4 V557.8 C249.8 556.6 248.6 554.6 248.4 551.6 C248.2 548.6 249.8 546 253.2 546Z" fill="#27ae60"/>
<path d="M250.8 559.6 L253.2 563.4 L255.6 559.6" fill="none" stroke="#fff" stroke-width="0.9"/><rect x="189.7" y="596.6" width="30.8" height="24.6" rx="2.6" fill="#fdfdfd" stroke="#27ae60" stroke-width="1.3"/>
<rect x="199" y="608.6" width="12.6" height="12.6" fill="#fdfdfd" stroke="#27ae60" stroke-width="1.0"/><path d="M201.4 615 H209.2 M205.3 611 V619" stroke="#27ae60" stroke-width="1.6"/><path d="M240.4 598.4 C240.4 593 263.2 593 263.2 598.4 V618.6 C263.2 624 240.4 624 240.4 618.6Z" fill="#27ae60"/>
<path d="M240.4 599.6 C240.4 604.6 263.2 604.6 263.2 599.6 M240.4 606.4 C240.4 611.4 263.2 611.4 263.2 606.4 M240.4 613.2 C240.4 618.2 263.2 618.2 263.2 613.2" fill="none" stroke="#fdfdfd" stroke-width="1.1"/>
<circle cx="259.6" cy="616.2" r="7.4" fill="#fdfdfd"/><path d="M264.50 616.33 L266.18 616.73 L265.87 618.27 L264.16 617.98 L263.48 619.19 L264.61 620.50 L263.45 621.56 L262.24 620.33 L260.99 620.90 L261.13 622.62 L259.57 622.80 L259.31 621.09 L257.96 620.82 L257.06 622.29 L255.69 621.52 L256.49 619.99 L255.56 618.97 L253.97 619.64 L253.31 618.21 L254.86 617.44 L254.70 616.07 L253.02 615.67 L253.33 614.13 L255.04 614.42 L255.72 613.21 L254.59 611.90 L255.75 610.84 L256.96 612.07 L258.21 611.50 L258.07 609.78 L259.63 609.60 L259.89 611.31 L261.24 611.58 L262.14 610.11 L263.51 610.88 L262.71 612.41 L263.64 613.43 L265.23 612.76 L265.89 614.19 L264.34 614.96Z" fill="#27ae60"/><circle cx="259.6" cy="616.2" r="2.9" fill="#fdfdfd"/><rect x="190" y="693.7" width="30" height="23.4" fill="#fdfdfd" stroke="#444" stroke-width="1.7"/><path d="M197.4 698.2 V712.6" stroke="#444" stroke-width="1.3"/><path d="M238 696.9 H263 L268.2 706 L263 715 H238 L243 706Z" fill="#fdfdfd" stroke="#555" stroke-width="1"/></svg>
<div style="left:298.3px;top:167px;width:15.4px;height:583px;background:#f3f3f3;border-left:1px solid #e6e6e6;border-right:1px solid #e6e6e6"></div>
<div style="left:298.3px;top:183px;width:15.4px;height:451px;background:#dcdcdc"></div>
<div style="left:298.3px;top:167.4px;width:15.4px;height:15.6px;background:#fdfdfd;border:1px solid #e0e0e0"></div>
<div style="left:298.3px;top:734px;width:15.4px;height:15.6px;background:#fdfdfd;border:1px solid #e0e0e0"></div>
<svg style="left:301px;top:170.6px" width="10" height="7" viewBox="0 0 10 7"><path d="M0.5 6 L5 1.2 L9.5 6" stroke="#9a9a9a" stroke-width="1.7" fill="none"/></svg>
<svg style="left:301px;top:738.4px" width="10" height="7" viewBox="0 0 10 7"><path d="M0.5 1 L5 5.8 L9.5 1" stroke="#9a9a9a" stroke-width="1.7" fill="none"/></svg>
<div style="left:301px;top:404.4px;width:10px;height:1.5px;background:#c2c2c2"></div><div style="left:301px;top:408.4px;width:10px;height:1.5px;background:#c2c2c2"></div><div style="left:301px;top:412.4px;width:10px;height:1.5px;background:#c2c2c2"></div>
<div style="left:314px;top:162px;width:8px;height:6px;background:#fff"></div>
<svg style="left:315px;top:167px" width="5" height="21" viewBox="0 0 5 21"><path d="M3.9 0.4 L0.7 3.9 L3.9 7.4 M0.7 13.2 L3.9 16.8 L0.7 20.4" stroke="#9a9a9a" stroke-width="1.3" fill="none"/></svg>
<div style="left:322px;top:166px;width:814px;height:252px;background-color:#fff;border-left:1px solid #dcdcdc;border-bottom:1px solid #dcdcdc;
background-image:radial-gradient(circle at 0.5px 0.5px,#b9b9b9 0.55px,rgba(185,185,185,0) 0.95px);background-size:10px 10px;background-position:0px 1px"></div>
<svg style="left:0;top:0" width="1140" height="430" viewBox="0 0 1140 430"><path d="M383.5 187.5 H933.6 L943.6 202.5 L933.6 217.5 H383.5 L393.6 202.5Z" fill="#fff" stroke="#4a4a4a" stroke-width="1"/><rect x="343.7" y="227" width="40" height="160" fill="#fff" stroke="#000" stroke-width="2"/><rect x="383.7" y="227.1" width="559.7" height="160" fill="none" stroke="#000" stroke-width="2.7"/><path d="M944.4 226 V388.4" stroke="#777" stroke-width="0.8"/><rect x="347.3" y="231.4" width="8.4" height="8.4" rx="1.2" fill="#f4f6fa" stroke="#7f9ccb" stroke-width="0.9"/><rect x="348.1" y="236.6" width="6.8" height="2.6" fill="#dfe3ea"/><path d="M349.1 235.6 H354.1" stroke="#000" stroke-width="1.3"/><rect x="387.4" y="231.4" width="8.4" height="8.4" rx="1.2" fill="#f4f6fa" stroke="#7f9ccb" stroke-width="0.9"/><rect x="388.2" y="236.6" width="6.8" height="2.6" fill="#dfe3ea"/><path d="M389.2 235.6 H394.2" stroke="#000" stroke-width="1.3"/><rect x="543.7" y="267.5" width="159.8" height="80" rx="10.5" fill="#fff" stroke="#27ae60" stroke-width="2.2"/><g transform="translate(552.8 275.2) scale(0.426 0.462)"><path d="M12.2 0 C15.6 0 17.2 2.6 17 5.6 C16.8 8.6 15.6 10.6 14.6 11.8 V13.4 L20.6 15.8 C23 16.8 24.4 19 24.4 22 V26.4 C24.4 28.2 21 29.4 12.2 29.4 C3.4 29.4 0 28.2 0 26.4 V22 C0 19 1.4 16.8 3.8 15.8 L9.8 13.4 V11.8 C8.8 10.6 7.6 8.6 7.4 5.6 C7.2 2.6 8.8 0 12.2 0Z" fill="#27ae60"/><path d="M9.8 13.6 L12.2 17.4 L14.6 13.6" fill="none" stroke="#fff" stroke-width="1.6"/></g><path d="M494 307.5 H539.4" stroke="#000" stroke-width="1.1"/><path d="M544.4 307.5 L536.8 303.6 L538.1999999999999 307.5 L536.8 311.4Z" fill="#000"/><path d="M703.5 307.5 H749" stroke="#000" stroke-width="1.1"/><path d="M754 307.5 L746.4 303.6 L747.8 307.5 L746.4 311.4Z" fill="#000"/><circle cx="773.8" cy="307.4" r="19.8" fill="#fff" stroke="#0e8ed6" stroke-width="4.2"/><circle cx="473.5" cy="307.5" r="19.3" fill="#fff" stroke="#0e8ed6" stroke-width="1.9"/><path d="M464.0075 296.0 H476.1065 L481.9925 301.886 V317.8 H464.0075Z" fill="#eaf5fc" stroke="#1690d8" stroke-width="0.9810000000000001"/><path d="M476.1065 296.0 V301.886 H481.9925Z" fill="#1690d8"/><path d="M467.93149999999997 305.81 H478.06850000000003 M467.93149999999997 309.516 H478.06850000000003 M467.93149999999997 313.222 H478.06850000000003" stroke="#1690d8" stroke-width="1.308"/><rect x="453.5" y="287.5" width="40" height="40" fill="none" stroke="#00e000" stroke-width="0.9" stroke-dasharray="3 3"/><rect x="450.5" y="284.5" width="6" height="6" fill="#00e800" stroke="#000" stroke-width="1"/><rect x="450.5" y="304.5" width="6" height="6" fill="#00e800" stroke="#000" stroke-width="1"/><rect x="450.5" y="324.5" width="6" height="6" fill="#00e800" stroke="#000" stroke-width="1"/><rect x="470.5" y="284.5" width="6" height="6" fill="#00e800" stroke="#000" stroke-width="1"/><rect x="470.5" y="324.5" width="6" height="6" fill="#00e800" stroke="#000" stroke-width="1"/><rect x="490.5" y="284.5" width="6" height="6" fill="#00e800" stroke="#000" stroke-width="1"/><rect x="490.5" y="304.5" width="6" height="6" fill="#00e800" stroke="#000" stroke-width="1"/><rect x="490.5" y="324.5" width="6" height="6" fill="#00e800" stroke="#000" stroke-width="1"/></svg>
<div class="t" style="left:645.4px;top:197.64px;font-size:12px;color:#111;letter-spacing:-0.917px;">Phase1</div>
<div class="t" style="left:364.2px;top:321.6px;font-size:11.8px;font-weight:700;letter-spacing:-0.85px;transform-origin:0 0;transform:rotate(-90deg) translateY(-10.16px)">Pool1</div>
<div class="t" style="left:404.2px;top:322.2px;font-size:12px;font-style:italic;letter-spacing:-0.3px;transform-origin:0 0;transform:rotate(-90deg) translateY(-10.16px)">Lane1</div>
<svg style="left:329px;top:418.2px" width="24" height="5" viewBox="0 0 24 5"><path d="M0.6 4.4 L4.3 0.8 L8 4.4 M16 0.8 L19.7 4.4 L23.4 0.8" stroke="#b0b0b0" stroke-width="1.1" fill="none"/></svg>
<div style="left:712px;top:420px;width:4px;height:4px;border-radius:1.2px;background:#bdbdbd"></div><div style="left:719px;top:420px;width:4px;height:4px;border-radius:1.2px;background:#bdbdbd"></div><div style="left:726px;top:420px;width:4px;height:4px;border-radius:1.2px;background:#bdbdbd"></div><div style="left:733px;top:420px;width:4px;height:4px;border-radius:1.2px;background:#bdbdbd"></div><div style="left:740px;top:420px;width:4px;height:4px;border-radius:1.2px;background:#bdbdbd"></div>
<div style="left:712px;top:624px;width:4px;height:4px;border-radius:1.2px;background:#bdbdbd"></div><div style="left:719px;top:624px;width:4px;height:4px;border-radius:1.2px;background:#bdbdbd"></div><div style="left:726px;top:624px;width:4px;height:4px;border-radius:1.2px;background:#bdbdbd"></div><div style="left:733px;top:624px;width:4px;height:4px;border-radius:1.2px;background:#bdbdbd"></div><div style="left:740px;top:624px;width:4px;height:4px;border-radius:1.2px;background:#bdbdbd"></div>
<div style="left:315.2px;top:439px;width:4px;height:4px;border-radius:1.5px;background:#bdbdbd"></div><div style="left:315.2px;top:446px;width:4px;height:4px;border-radius:1.5px;background:#bdbdbd"></div><div style="left:315.2px;top:453px;width:4px;height:4px;border-radius:1.5px;background:#bdbdbd"></div><div style="left:315.2px;top:460px;width:4px;height:4px;border-radius:1.5px;background:#bdbdbd"></div><div style="left:315.2px;top:467px;width:4px;height:4px;border-radius:1.5px;background:#bdbdbd"></div>
<div style="left:155.2px;top:392px;width:3.8px;height:4px;border-radius:1.6px;background:#b4b9cf"></div><div style="left:155.2px;top:399px;width:3.8px;height:4px;border-radius:1.6px;background:#b4b9cf"></div><div style="left:155.2px;top:406px;width:3.8px;height:4px;border-radius:1.6px;background:#b4b9cf"></div><div style="left:155.2px;top:413px;width:3.8px;height:4px;border-radius:1.6px;background:#b4b9cf"></div><div style="left:155.2px;top:420px;width:3.8px;height:4px;border-radius:1.6px;background:#b4b9cf"></div>
<div style="left:325px;top:429px;width:808px;height:193px;background:#fcfcfc;border:1px solid #dcdcdc"></div>
<div style="left:326px;top:449px;width:806px;height:1px;background:#e2e2e2"></div>
<div style="left:326px;top:469px;width:806px;height:1px;background:#e2e2e2"></div>
<div style="left:326px;top:489px;width:806px;height:1px;background:#e2e2e2"></div>
<div style="left:326px;top:509px;width:806px;height:1px;background:#e2e2e2"></div>
<div style="left:326px;top:529px;width:806px;height:1px;background:#e2e2e2"></div>
<div style="left:326px;top:549px;width:806px;height:1px;background:#e2e2e2"></div>
<div style="left:326px;top:569px;width:806px;height:1px;background:#e2e2e2"></div>
<div style="left:326px;top:589px;width:806px;height:1px;background:#e2e2e2"></div>
<div style="left:565px;top:430px;width:1px;height:160px;background:#e2e2e2"></div>
<div style="left:566px;top:550px;width:566px;height:19px;background:#f3f3f3"></div><div style="left:566px;top:570px;width:566px;height:19px;background:#f3f3f3"></div>
<div style="left:329px;top:434.3px;width:10.4px;height:10.4px;border-radius:2.4px;border:1px solid #adadad;background:linear-gradient(#ededed,#c4c4c4)"></div><div style="left:331.4px;top:438.90000000000003px;width:5.6px;height:1.3px;background:#8a8a8a"></div>
<div style="left:329px;top:494.3px;width:10.4px;height:10.4px;border-radius:2.4px;border:1px solid #adadad;background:linear-gradient(#ededed,#c4c4c4)"></div><div style="left:331.4px;top:498.90000000000003px;width:5.6px;height:1.3px;background:#8a8a8a"></div>
<div class="t" style="left:346.3px;top:434.04px;font-size:12px;color:#111;letter-spacing:-0.195px;font-weight:700;">Allgemein</div>
<div class="t" style="left:346.3px;top:494.04px;font-size:12px;color:#111;letter-spacing:-0.181px;font-weight:700;">Konfiguration</div>
<div class="t" style="left:328.6px;top:453.74px;font-size:12px;color:#111;letter-spacing:-0.236px;">Bezeichnung</div>
<div class="t" style="left:328.6px;top:473.74px;font-size:12px;color:#111;letter-spacing:0.075px;">Dokumentation</div>
<div class="t" style="left:328.6px;top:513.84px;font-size:12px;color:#111;letter-spacing:-0.407px;">Ereignis</div>
<div class="t" style="left:328.6px;top:533.84px;font-size:12px;color:#111;letter-spacing:-0.090px;">Entität</div>
<div class="t" style="left:328.6px;top:553.84px;font-size:12px;color:#111;letter-spacing:-0.043px;">Bedingung</div>
<div class="t" style="left:328.6px;top:573.84px;font-size:12px;color:#111;letter-spacing:-0.167px;">Ausgabeparameter</div>
<div style="left:566.3px;top:470.2px;width:29.4px;height:18.4px;border-radius:3.5px;border:1px solid #aeaeae;background:linear-gradient(#ececec,#dedede)"></div><div style="left:572.9px;top:475.2px;width:16px;height:8px;background:#90c8f6"></div><svg style="left:579.9px;top:472.2px" width="8" height="14" viewBox="0 0 8 14"><path d="M0.4 0.6 H7.6 M0.4 13.4 H7.6 M4 0.6 V13.4" stroke="#3a45b5" stroke-width="1.1" fill="none"/></svg>
<div style="left:566.3px;top:550.2px;width:29.4px;height:18.4px;border-radius:3.5px;border:1px solid #aeaeae;background:linear-gradient(#ececec,#dedede)"></div><div style="left:572.9px;top:555.2px;width:16px;height:8px;background:#90c8f6"></div><svg style="left:579.9px;top:552.2px" width="8" height="14" viewBox="0 0 8 14"><path d="M0.4 0.6 H7.6 M0.4 13.4 H7.6 M4 0.6 V13.4" stroke="#3a45b5" stroke-width="1.1" fill="none"/></svg>
<div style="left:566.3px;top:570.6px;width:29.4px;height:18.4px;border-radius:3.5px;border:1px solid #c6c6c6;background:#efefef"></div><div style="left:572.9px;top:575.6px;width:16px;height:8px;background:#f6f6f6"></div><svg style="left:579.9px;top:572.6px" width="8" height="14" viewBox="0 0 8 14"><path d="M0.4 0.6 H7.6 M0.4 13.4 H7.6 M4 0.6 V13.4" stroke="#c8c8c8" stroke-width="1.1" fill="none"/></svg>
<div style="left:566.2px;top:510px;width:565.6px;height:18.6px;border-radius:3.5px;border:1px solid #adadad;background:#e3e3e3"></div>
<svg style="left:1118px;top:516px" width="10" height="6.4" viewBox="0 0 10 6.4"><path d="M0.4 0.5 L5 5.4 L9.6 0.5" stroke="#a6a6a6" stroke-width="1.5" fill="none"/></svg>
<div class="t" style="left:568.4px;top:513.94px;font-size:12px;color:#111;letter-spacing:0.036px;">Dokumentvorlage</div>
<div style="left:566.2px;top:530.2px;width:565.6px;height:18.6px;border-radius:3.5px;border:1px solid #adadad;background:#e3e3e3"></div>
<svg style="left:1118px;top:536.2px" width="10" height="6.4" viewBox="0 0 10 6.4"><path d="M0.4 0.5 L5 5.4 L9.6 0.5" stroke="#a6a6a6" stroke-width="1.5" fill="none"/></svg>
<div class="t" style="left:568.4px;top:534.14px;font-size:12px;color:#111;letter-spacing:-0.197px;font-style:italic;">Bitte erstellen Sie zunächst ein Datenmodell für den Prozess.</div>
<div class="t" style="left:601.3px;top:553.84px;font-size:12px;color:#111;letter-spacing:0.018px;">//last line must return a boolean value!return true;</div>
<div style="left:325px;top:630px;width:808px;height:117px;background:#fdfdfd;border:1px solid #dcdcdc"></div>
<div class="t" style="left:326.6px;top:633.84px;font-size:12px;color:#111;letter-spacing:-0.243px;font-weight:700;">Bedingtes Start-Ereignis</div>
<div class="t" style="left:326.6px;top:649.84px;font-size:12px;color:#111;letter-spacing:-0.201px;">Ein Start-Ereignis erlaubt nur einen ausgehenden Sequenzfluss</div>
</body></html>
